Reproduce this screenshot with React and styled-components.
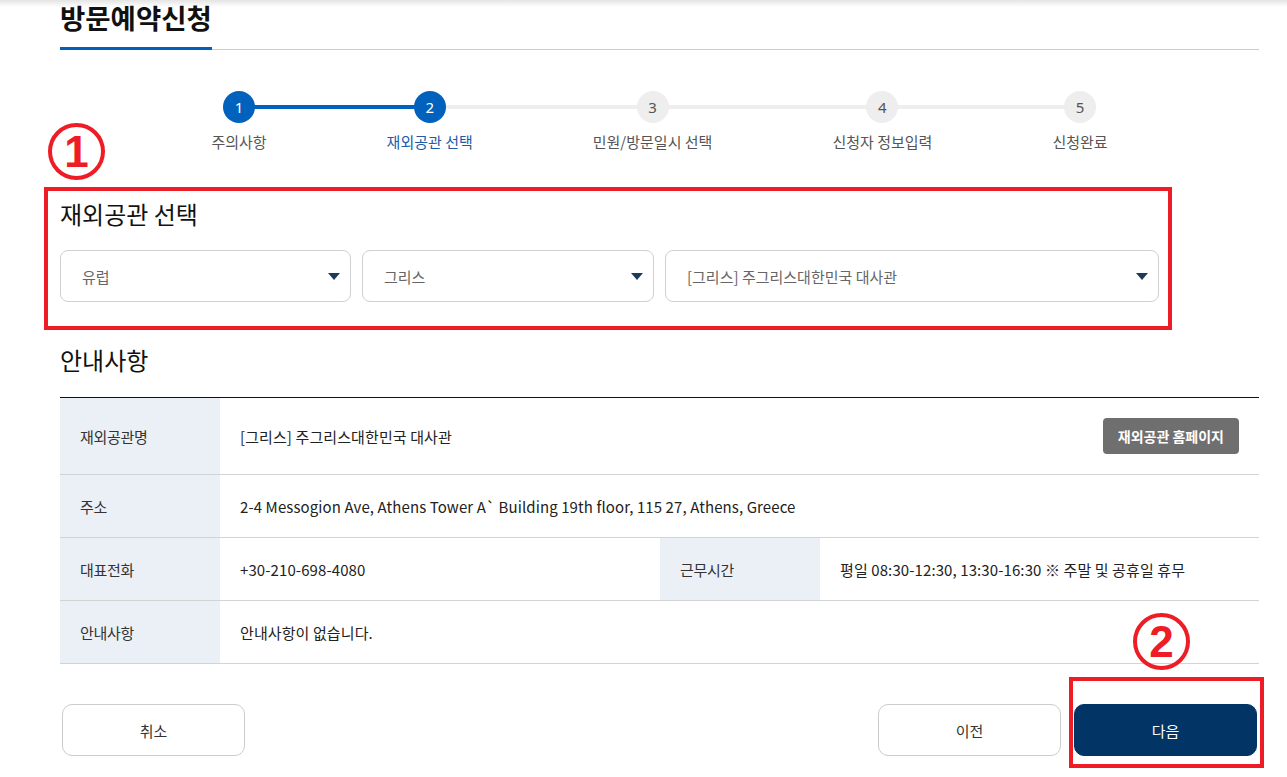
import React from 'react'
import styled, { createGlobalStyle } from 'styled-components'

const GlobalStyle = createGlobalStyle`
   * { box-sizing: border-box; }
   body {
      margin: 0;
      background: linear-gradient(to bottom, #e4e4e4 0, #ffffff 7px) no-repeat, #ffffff;
      font-family: "Noto Sans CJK KR", "Noto Sans", sans-serif;
      color: #222;
   }
`

const Page = styled.div`
   position: relative;
   width: 1199px;
   margin-left: 60px;
   padding-bottom: 21px;
`

const TitleBar = styled.div`
   display: flex;
   border-bottom: 1px solid #cccccc;
`

const Title = styled.h1`
   margin: 0 0 -1px;
   padding: 2px 0 15px;
   font-size: 27.5px;
   line-height: 30px;
   font-weight: 700;
   color: #111;
   border-bottom: 3px solid #0061bb;
`

const Steps = styled.ol`
   display: flex;
   justify-content: center;
   gap: 120px;
   margin: 41px 0 0;
   padding: 0;
   list-style: none;
`

const Step = styled.li`
   position: relative;
   display: flex;
   flex-direction: column;
   align-items: center;
   &::after {
      content: '';
      display: ${props => (props.line ? 'block' : 'none')};
      position: absolute;
      top: 14px;
      left: 50%;
      width: ${props => props.line || 0}px;
      height: 4px;
      background: ${props => (props.done ? '#0062bd' : '#eeeeee')};
   }
`

const Dot = styled.span`
   position: relative;
   z-index: 1;
   display: flex;
   align-items: center;
   justify-content: center;
   width: 32px;
   height: 32px;
   border-radius: 50%;
   background: ${props => (props.on ? '#0062bd' : '#eeeeee')};
   color: ${props => (props.on ? '#ffffff' : '#555555')};
   font-family: "Noto Sans", sans-serif;
   font-size: 15px;
`

const StepLabel = styled.span`
   margin-top: 9px;
   font-size: 15px;
   line-height: 20px;
   white-space: nowrap;
   color: ${props => (props.current ? '#1a5caa' : '#555555')};
`

const Section = styled.section`
   position: relative;
   margin-top: ${props => props.top}px;
`

const Heading = styled.h2`
   margin: 0;
   font-size: 24px;
   line-height: 30px;
   font-weight: 400;
   color: #111;
`

const Selects = styled.div`
   display: grid;
   grid-template-columns: 291px 292px 494px;
   gap: 11px;
   margin-top: 21px;
`

const Select = styled.div`
   display: flex;
   align-items: center;
   justify-content: space-between;
   height: 52px;
   padding: 0 10px 0 21px;
   border: 1px solid #cfcfd4;
   border-radius: 8px;
   font-size: 15px;
   color: #666;
   &::after {
      content: '';
      border-left: 6px solid transparent;
      border-right: 6px solid transparent;
      border-top: 7px solid #1b3a5c;
   }
`

const Table = styled.div`
   display: grid;
   grid-template-columns: 160px 440px 160px 1fr;
   margin-top: 22px;
   border-top: 1px solid #111;
`

const Th = styled.div`
   display: flex;
   align-items: center;
   padding: 20px;
   min-height: 63px;
   background: #ebf0f7;
   border-bottom: 1px solid #d3d3d3;
   font-size: 15px;
   letter-spacing: -0.3px;
   color: #333;
`

const Td = styled.div`
   display: flex;
   align-items: center;
   justify-content: space-between;
   grid-column: span ${props => props.span || 1};
   padding: 20px;
   min-height: 63px;
   border-bottom: 1px solid #d3d3d3;
   font-size: 15px;
   letter-spacing: 0.1px;
   color: #222;
`

const GreyButton = styled.button`
   height: 36px;
   padding: 0 15px;
   border: none;
   border-radius: 4px;
   background: #6f6f6f;
   color: #fff;
   font-family: inherit;
   font-size: 14px;
   font-weight: 700;
   letter-spacing: 0;
`

const Actions = styled.div`
   position: relative;
   display: flex;
   gap: 13px;
   margin-top: 40px;
   padding: 0 2px;
`

const Spacer = styled.div`
   flex: 1;
`

const Button = styled.button`
   width: 183px;
   height: 52px;
   border: 1px solid ${props => (props.primary ? '#023466' : '#cccccc')};
   border-radius: 10px;
   background: ${props => (props.primary ? '#023466' : '#ffffff')};
   color: ${props => (props.primary ? '#ffffff' : '#333333')};
   font-family: inherit;
   font-size: 15px;
`

const RedFrame = styled.div`
   position: absolute;
   top: ${props => props.y}px;
   left: ${props => props.x}px;
   width: ${props => props.w}px;
   height: ${props => props.h}px;
   border: 4px solid #ee1c25;
   pointer-events: none;
`

const Mark = styled.span`
   position: absolute;
   top: ${props => props.y}px;
   left: ${props => props.x}px;
   display: flex;
   align-items: center;
   justify-content: center;
   width: 57px;
   height: 57px;
   border: 4px solid #ee1c25;
   border-radius: 50%;
   color: #ee1c25;
   font-family: "Liberation Sans", Arial, sans-serif;
   font-size: 44px;
   font-weight: 700;
   line-height: 1;
`

const steps = [
   { label: '주의사항', line: 192, done: true },
   { label: '재외공관 선택', line: 226 },
   { label: '민원/방문일시 선택', line: 232 },
   { label: '신청자 정보입력', line: 200 },
   { label: '신청완료' },
]

const App = () => (
   <Page>
      <GlobalStyle />
      <TitleBar>
         <Title>방문예약신청</Title>
      </TitleBar>

      <Steps>
         {steps.map((s, i) => (
            <Step key={s.label} line={s.line} done={s.done}>
               <Dot on={i < 2}>{i + 1}</Dot>
               <StepLabel current={i === 1}>{s.label}</StepLabel>
            </Step>
         ))}
      </Steps>

      <Section top={47}>
         <Mark x={-12} y={-76}>1</Mark>
         <RedFrame x={-16} y={-12} w={1128} h={143} />
         <Heading>재외공관 선택</Heading>
         <Selects>
            <Select>유럽</Select>
            <Select>그리스</Select>
            <Select>[그리스] 주그리스대한민국 대사관</Select>
         </Selects>
      </Section>

      <Section top={43}>
         <Heading>안내사항</Heading>
         <Table>
            <Th>재외공관명</Th>
            <Td span={3}>
               [그리스] 주그리스대한민국 대사관
               <GreyButton>재외공관 홈페이지</GreyButton>
            </Td>
            <Th>주소</Th>
            <Td span={3}>2-4 Messogion Ave, Athens Tower A` Building 19th floor, 115 27, Athens, Greece</Td>
            <Th>대표전화</Th>
            <Td>+30-210-698-4080</Td>
            <Th>근무시간</Th>
            <Td>평일 08:30-12:30, 13:30-16:30 ※ 주말 및 공휴일 휴무</Td>
            <Th>안내사항</Th>
            <Td span={3}>안내사항이 없습니다.</Td>
         </Table>
      </Section>

      <Actions>
         <Mark x={1073} y={-91}>2</Mark>
         <RedFrame x={1009} y={-27} w={195} h={91} />
         <Button>취소</Button>
         <Spacer />
         <Button>이전</Button>
         <Button primary>다음</Button>
      </Actions>
   </Page>
)

export default App
